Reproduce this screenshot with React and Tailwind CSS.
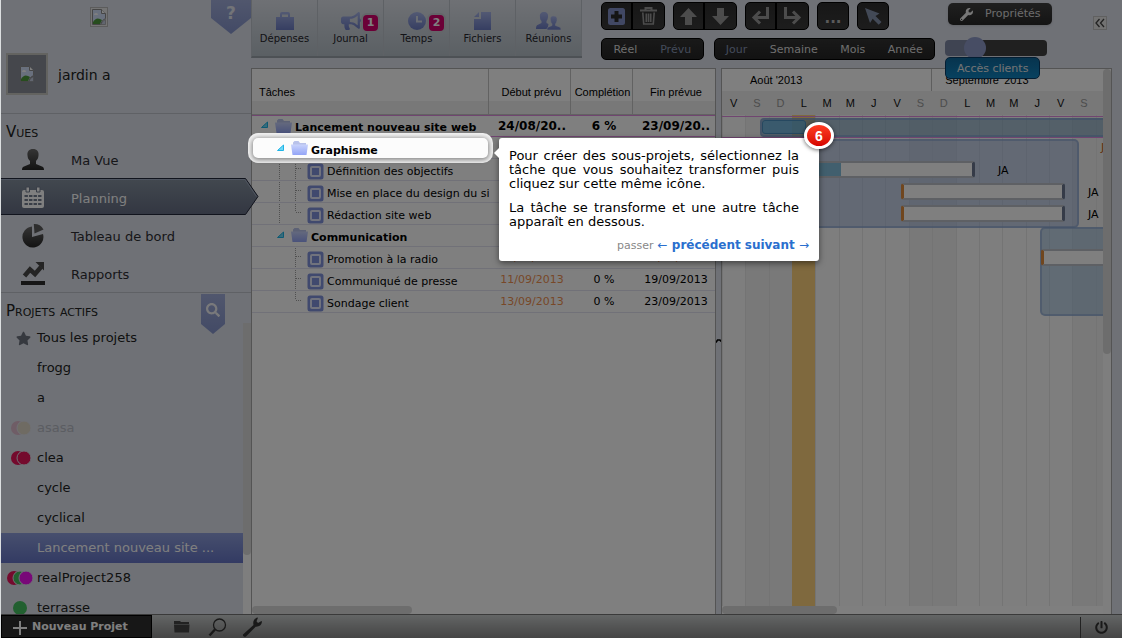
import React from "react";
import { FaSearch, FaStar, FaPowerOff, FaWrench, FaBullhorn } from "react-icons/fa";

const projects = [
  { name: "Tous les projets", star: true },
  { name: "frogg" },
  { name: "a" },
  { name: "asasa", faded: true, dots: ["#e0a0b8", "#e0cfae"] },
  { name: "clea", dots: ["#e8145a", "#e8145a"] },
  { name: "cycle" },
  { name: "cyclical" },
  { name: "Lancement nouveau site ...", selected: true },
  { name: "realProject258", dots: ["#e8145a", "#44c060", "#f010f0"] },
  { name: "terrasse", dots: ["#44c060"] },
];

const tasks = [
  { name: "Lancement nouveau site web", kind: "root", start: "24/08/20..", done: "6 %", end: "23/09/20.." },
  { name: "Graphisme", kind: "group" },
  { name: "Définition des objectifs", kind: "leaf", guide: true },
  { name: "Mise en place du design du site", kind: "leaf", guide: true },
  { name: "Rédaction site web", kind: "leaf", guide: true, last: true },
  { name: "Communication", kind: "group" },
  { name: "Promotion à la radio", kind: "leaf", late: true, lateEnd: true, start: "05/09/2013", done: "0 %", end: "12/09/2013" },
  { name: "Communiqué de presse", kind: "leaf", late: true, start: "11/09/2013", done: "0 %", end: "19/09/2013" },
  { name: "Sondage client", kind: "leaf", late: true, last: true, start: "13/09/2013", done: "0 %", end: "23/09/2013" },
];

const days = ["V", "S", "D", "L", "M", "M", "J", "V", "S", "D", "L", "M", "M", "J", "V", "S", ""];
const weekend = (i) => i % 7 === 1 || i % 7 === 2;

const bars = [
  { left: 40, top: 46, width: 213, progress: 76 },
  { left: 179, top: 68, width: 164, late: true },
  { left: 179, top: 90, width: 164, late: true },
  { left: 319, top: 134, width: 180, late: true },
];

const owners = [
  { left: 276, top: 48 },
  { left: 366, top: 70 },
  { left: 366, top: 92 },
];

function Missing() {
  return (
    <svg width="14" height="16" viewBox="0 0 14 16" aria-hidden="true">
      <path d="M.5.5h9l4 4v5l-3 2-2 4h-8z" fill="#d3e0fb" stroke="#8d8d8d" />
      <path d="M9.500 .5v4h4" fill="#fff" stroke="#8d8d8d" />
      <path d="M2 6q0-2 2-2t2 2z" fill="#fff" />
      <path d="M1 15v-2q3-5 7-3l2 1-2 4z" fill="#4f9a3c" />
      <path d="M9 15.500l1.500-3 3-2v5z" fill="#c4cde0" stroke="#8d8d8d" strokeWidth=".6" />
    </svg>
  );
}

function Ribbon({ width, height, tip }) {
  return (
    <svg className="absolute inset-0" width={width} height={height} aria-hidden="true">
      <path d={`M0 0H${width}V${height - tip}L${width / 2} ${height}L0 ${height - tip}z`} fill="url(#ribbon)" />
    </svg>
  );
}

function Defs() {
  return (
    <svg width="0" height="0" className="absolute" aria-hidden="true">
      <defs>
        <linearGradient id="ribbon" x1="0" y1="0" x2="0" y2="1">
          <stop offset="0" stopColor="#a2aedb" />
          <stop offset="1" stopColor="#8594cc" />
        </linearGradient>
        <linearGradient id="blue" x1="0" y1="0" x2="0" y2="1">
          <stop offset="0" stopColor="#a6b3e8" />
          <stop offset="1" stopColor="#6c7cc4" />
        </linearGradient>
        <linearGradient id="folder" x1="0" y1="0" x2="0" y2="1">
          <stop offset="0" stopColor="#c9d3fb" />
          <stop offset="1" stopColor="#93a4f7" />
        </linearGradient>
        <linearGradient id="ink" x1="0" y1="0" x2="0" y2="1">
          <stop offset="0" stopColor="#6a6a6a" />
          <stop offset="1" stopColor="#262626" />
        </linearGradient>
        <linearGradient id="arrow" x1="0" y1="0" x2="0" y2="1">
          <stop offset="0" stopColor="#85919f" />
          <stop offset="1" stopColor="#666e84" />
        </linearGradient>
      </defs>
    </svg>
  );
}

const navIcons = {
  user: (
    <svg width="24" height="24" viewBox="0 0 24 24" aria-hidden="true">
      <path d="M12 1c4 0 6 2.500 5.500 6.500-.2 2.500-1 4-2.500 5.500v3l6 2.500c1.500.6 2 1.500 2 3.500H1c0-2 .5-2.900 2-3.500L9 16v-3C7.500 11.500 6.700 10 6.500 7.500 6 3.500 8 1 12 1z" fill="url(#ink)" />
    </svg>
  ),
  calendar: (
    <svg width="24" height="24" viewBox="0 0 24 24" aria-hidden="true">
      <path d="M3 4h18a2 2 0 0 1 2 2v14a2 2 0 0 1-2 2H3a2 2 0 0 1-2-2V6a2 2 0 0 1 2-2z" fill="#fff" />
      <path d="M5 1h3.500v5H5zM15.500 1H19v5h-3.500z" fill="#fff" stroke="#737d8f" />
      <path d="M3.500 10h17M3.500 14h17M3.500 18h17" stroke="#737d8f" strokeWidth="2" strokeDasharray="3.400 1.130" />
    </svg>
  ),
  pie: (
    <svg width="24" height="24" viewBox="0 0 24 24" aria-hidden="true">
      <path d="M11 13V2.500A10.500 10.500 0 1 0 22 10z" fill="url(#ink)" />
      <path d="M13.500 9.500L12.800 0c4.200-.1 7.500 1.500 9.700 5.500z" fill="#5c5c5c" />
    </svg>
  ),
  trend: (
    <svg width="24" height="24" viewBox="0 0 24 24" aria-hidden="true">
      <path d="M0 19h24v4H0z" fill="#2c2c2c" />
      <path d="M3.500 14l5.500-6.500 5 4.500L20 5" fill="none" stroke="#484848" strokeWidth="4.500" />
      <path d="M14.500 0H23v8.500z" fill="#484848" />
    </svg>
  ),
};

function NavItem({ icon, label, active }) {
  return (
    <a href="#" className={"relative flex h-[38px] items-center pl-5 pt-0.5 text-[13px] " + (active ? "text-white" : "text-[#2e2e33]")}>
      {active && (
        <svg className="absolute left-0 top-0" width="259" height="38" viewBox="0 0 259 38" aria-hidden="true">
          <path d="M-2 .5H244.500L257 18.500L244.500 36.500H-2z" fill="url(#arrow)" stroke="#23283a" />
          <path d="M0 1.500H244L255.500 18.500" fill="none" stroke="#9fabc0" />
        </svg>
      )}
      <span className="relative flex w-6 justify-center">{navIcons[icon]}</span>
      <span className="relative ml-[26px] pt-0.5">{label}</span>
    </a>
  );
}

function Dots({ colors }) {
  const w = 14 + (colors.length - 1) * 6;
  return (
    <svg width={w} height="16" viewBox={`0 0 ${w} 16`} aria-hidden="true">
      {colors.map((c, i) => (
        <circle key={i} cx={7 + i * 6} cy="8" r="7" fill={c} stroke="#dee2ec" strokeWidth={i ? 1 : 0} />
      ))}
    </svg>
  );
}

function Sidebar() {
  return (
    <aside className="relative z-10 flex w-[250px] shrink-0 flex-col bg-[#dee2ec]">
      <div className="relative flex h-[114px] shrink-0 flex-col border-b border-[#bfc2ca]">
        <div className="ml-[89px] mt-[7px] flex h-5 w-[18px] items-center justify-center border border-[#b8b8b8] bg-[#e8e8e8]">
          <Missing />
        </div>
        <button aria-label="Aide" className="absolute right-0 top-0 h-[34px] w-10 pb-[6px] text-[17px] font-bold text-[#e6e8f0]">
          <Ribbon width={40} height={34} tip={16} />
          <span className="relative">?</span>
        </button>
        <div className="mt-[26px] flex items-center pl-[5px]">
          <div className="flex h-[42px] w-[42px] items-center justify-center border-2 border-[#c6c6c0] bg-[#8b8e99]">
            <Missing />
          </div>
          <span className="ml-[10px] pt-[3px] text-[14px] text-[#222]">jardin a</span>
        </div>
      </div>
      <div className="flex h-[179px] shrink-0 flex-col border-b border-[#bfc2ca]">
        <h2 className="h-[26px] pl-[5px] pt-2 text-[15px] leading-5 text-[#222] [font-variant:small-caps]">Vues</h2>
        <nav>
          <NavItem icon="user" label="Ma Vue" />
          <NavItem icon="calendar" label="Planning" active />
          <NavItem icon="pie" label="Tableau de bord" />
          <NavItem icon="trend" label="Rapports" />
        </nav>
      </div>
      <div className="relative h-[30px] shrink-0">
        <h2 className="pl-[5px] pt-2 text-[15px] leading-5 text-[#222] [font-variant:small-caps]">Projets actifs</h2>
        <button aria-label="Rechercher un projet" className="absolute right-[26px] top-px z-10 flex h-10 w-6 justify-center pt-[9px] text-[#f2f3f7]">
          <Ribbon width={24} height={40} tip={10} />
          <FaSearch size={14} className="relative" />
        </button>
      </div>
      <div className="flex min-h-0 flex-1 overflow-hidden">
        <ul className="min-w-0 flex-1">
          {projects.map((p) => (
            <li key={p.name}>
              <a
                href="#"
                className={
                  "flex h-[30px] items-center text-[13px] " +
                  (p.selected ? "bg-linear-to-b from-[#8f9fdc] to-[#6675c6] text-white" : p.faded ? "text-[#b7bac4]" : "text-[#222]")
                }
              >
                <span className={"flex w-9 shrink-0 justify-end " + (p.dots && p.dots.length === 1 ? "pr-[10px]" : p.dots && p.dots.length === 3 ? "pr-1" : "pr-[6px]") + (p.faded ? " opacity-60" : "")}>
                  {p.star && <FaStar size={15} color="#6d737f" />}
                  {p.dots && <Dots colors={p.dots} />}
                </span>
                <span className="whitespace-nowrap">{p.name}</span>
              </a>
            </li>
          ))}
        </ul>
        <div className="w-2 bg-[#fcfcfc]">
          <div className="h-[232px] rounded-b bg-[#dadada]" />
        </div>
      </div>
    </aside>
  );
}

const toolIcons = {
  bag: (
    <svg width="18" height="18" viewBox="0 0 18 18" fill="url(#blue)" aria-hidden="true">
      <path fillRule="evenodd" d="M0 5h4V2q0-2 2-2h6q2 0 2 2v3h4v13H0zM6 5h6V2.500H6z" />
    </svg>
  ),
  horn: <FaBullhorn size={20} fill="url(#blue)" />,
  clock: (
    <svg width="18" height="18" viewBox="0 0 18 18" aria-hidden="true">
      <circle cx="9" cy="9" r="9" fill="url(#blue)" />
      <path d="M9 4v5.500h5" fill="none" stroke="#d5dae6" strokeWidth="2" />
    </svg>
  ),
  file: (
    <svg width="17" height="18" viewBox="0 0 17 18" aria-hidden="true">
      <path d="M7 0h10v18H0V7h7zM5 0v5H0z" fill="url(#blue)" />
    </svg>
  ),
  people: (
    <svg width="25" height="18" viewBox="0 0 25 18" fill="url(#blue)" aria-hidden="true">
      <path d="M8 0c3 0 4.500 2 4 5-.2 2-.8 3-1.500 4v2l2 1-1 5H0c0-2.500.3-3.700 2-4.300L5.500 11V9C4.500 8 4 7 4 5c-.5-3 1-5 4-5z" />
      <path d="M17.500 4c3 0 4 2 3.500 4.500-.2 1.500-.7 2.500-1.500 3.500v1.500l3.500 1.200c1.500.6 2 1.300 2 3.300H11c0-2 .3-2.700 2-3.300l3-1.200V12c-.9-1-1.300-2-1.500-3.500C14 6 14.500 4 17.500 4z" stroke="#d0d5e2" strokeWidth=".6" />
    </svg>
  ),
};

function ToolTab({ icon, label, count }) {
  return (
    <a href="#" className="relative flex h-full w-[66px] flex-col items-center border-r border-[#bcc2ca] pt-3 text-[10px] text-[#26262c]">
      <span className="flex h-[18px] items-center">{toolIcons[icon]}</span>
      <span className="mt-[2px] leading-[14px]">{label}</span>
      {count && (
        <span className="absolute right-[3px] top-[13px] flex h-5 w-[19px] items-center justify-center rounded-md border-2 border-[#c8ccd2] bg-[#d6006e] text-[11px] font-bold text-white">
          {count}
        </span>
      )}
    </a>
  );
}

const glyphs = {
  add: (
    <svg width="17" height="17" viewBox="0 0 17 17" aria-hidden="true">
      <rect width="17" height="17" rx="2.500" fill="#8391c9" />
      <path d="M6.500 3h4v3.500H14v4h-3.500V14h-4v-3.500H3v-4h3.500z" fill="#2a2a2a" />
    </svg>
  ),
  trash: (
    <svg width="17" height="18" viewBox="0 0 17 18" fill="none" stroke="#989898" aria-hidden="true">
      <path d="M0 3.500h17M5.500 3V1h6v2" strokeWidth="2" />
      <path d="M2.800 5.500l.9 11.500h9.600l.9-11.500M6.300 6.500v8.500M8.500 6.500v8.500M10.700 6.500v8.500" strokeWidth="1.600" />
    </svg>
  ),
  up: (
    <svg width="17" height="17" viewBox="0 0 17 17" fill="#989898" aria-hidden="true">
      <path d="M8.500 0L17 9h-5v8H5V9H0z" />
    </svg>
  ),
  down: (
    <svg width="17" height="17" viewBox="0 0 17 17" fill="#989898" aria-hidden="true">
      <path d="M8.500 17L0 8h5V0h7v8h5z" />
    </svg>
  ),
  outdent: (
    <svg width="19" height="18" viewBox="0 0 19 18" fill="none" stroke="#989898" strokeWidth="3" aria-hidden="true">
      <path d="M16.500 0v10.500H3M9 4.500L3 10.500l6 6" />
    </svg>
  ),
  indent: (
    <svg width="19" height="18" viewBox="0 0 19 18" fill="none" stroke="#989898" strokeWidth="3" aria-hidden="true">
      <path d="M2.500 0v10.500H16M10 4.500l6 6-6 6" />
    </svg>
  ),
  more: <span className="pt-1 text-[15px] font-bold leading-4 text-[#b4b4b4]">...</span>,
  pointer: (
    <svg width="17" height="17" viewBox="0 0 17 17" aria-hidden="true">
      <path d="M0 0l14.500 5.500-4 2.500 6 6-2.800 2.800-6-6L5 15z" fill="#8592ac" />
    </svg>
  ),
};

const glyphLabels = {
  add: "Ajouter",
  trash: "Supprimer",
  up: "Monter",
  down: "Descendre",
  outdent: "Désindenter",
  indent: "Indenter",
  more: "Plus",
  pointer: "Sélection",
};

function ButtonGroup({ items }) {
  return (
    <div className="flex divide-x-2 divide-black overflow-hidden rounded-[5px] border border-black bg-linear-to-b from-[#2e2e2e] to-[#3a3a3a]">
      {items.map((k) => (
        <button key={k} aria-label={glyphLabels[k]} className="flex h-[26px] w-[31px] items-center justify-center only:w-[30px]">
          {glyphs[k]}
        </button>
      ))}
    </div>
  );
}

function Choice({ items, selected }) {
  return (
    <div className="flex grow rounded-[5px] border border-black bg-linear-to-b from-[#333] to-[#252525]">
      {items.map((t) => (
        <button key={t} className={"h-5 grow px-[11px] text-[11px] leading-none " + (t === selected ? "text-[#8796b4]" : "text-[#dcdcdc]")}>
          {t}
        </button>
      ))}
    </div>
  );
}

function Header() {
  return (
    <header className="relative z-10 flex h-[68px] shrink-0 items-start">
      <div className="flex h-[58px] border-b-2 border-l border-b-[#9aa2aa] border-l-[#bcc2ca] bg-linear-to-b from-[#dee2ea] to-[#b6c0c8]">
        <ToolTab icon="bag" label="Dépenses" />
        <ToolTab icon="horn" label="Journal" count="1" />
        <ToolTab icon="clock" label="Temps" count="2" />
        <ToolTab icon="file" label="Fichiers" />
        <ToolTab icon="people" label="Réunions" />
      </div>
      <div className="ml-[19px] flex w-[334px] flex-col gap-2 pt-[2px]">
        <div className="flex gap-2">
          <ButtonGroup items={["add", "trash"]} />
          <ButtonGroup items={["up", "down"]} />
          <ButtonGroup items={["outdent", "indent"]} />
          <ButtonGroup items={["more"]} />
          <ButtonGroup items={["pointer"]} />
        </div>
        <div className="flex gap-[10px]">
          <Choice items={["Réel", "Prévu"]} selected="Prévu" />
          <Choice items={["Jour", "Semaine", "Mois", "Année"]} selected="Jour" />
        </div>
      </div>
      <div className="ml-[10px] flex flex-col items-start pt-[3px]">
        <button className="ml-[3px] flex h-[22px] w-[104px] items-center gap-3 rounded-[5px] bg-linear-to-b from-[#404040] to-[#282828] pl-3 text-[11px] text-[#d8d8d8] shadow">
          <FaWrench size={13} color="#eee" />
          Propriétés
        </button>
        <input
          type="range"
          aria-label="Zoom"
          defaultValue="24"
          className="mt-[12px] h-[22px] w-[102px] appearance-none bg-transparent [&::-webkit-slider-runnable-track]:h-4 [&::-webkit-slider-runnable-track]:rounded-[4px] [&::-webkit-slider-runnable-track]:bg-[linear-gradient(90deg,#7f88a4_25%,#404040_25%)] [&::-webkit-slider-thumb]:-mt-[3px] [&::-webkit-slider-thumb]:h-[22px] [&::-webkit-slider-thumb]:w-[22px] [&::-webkit-slider-thumb]:appearance-none [&::-webkit-slider-thumb]:rounded-full [&::-webkit-slider-thumb]:bg-[#8e9ac8]"
        />
        <button className="-mt-[2px] h-[22px] rounded-[5px] border border-[#083c66] bg-linear-to-b from-[#0f689c] to-[#1084c0] px-[11px] text-[11px] leading-none text-[#e6e6e6]">
          Accès clients
        </button>
      </div>
      <button aria-label="Replier" className="ml-auto mr-[15px] mt-[16px] flex h-[14px] w-[14px] items-center justify-center border border-[#c0c0c0] bg-[#e4e4e4]">
        <svg width="10" height="10" viewBox="0 0 10 10" fill="none" stroke="#444" strokeWidth="1.300" aria-hidden="true">
          <path d="M4.500 1l-3.500 4 3.500 4M9 1L5.500 5 9 9" />
        </svg>
      </button>
    </header>
  );
}

function Toggle() {
  return (
    <svg width="16" height="21" viewBox="0 0 16 21" className="shrink-0" aria-hidden="true">
      <path d="M5.500 10.500L11.500 5v5.500z" fill="#6fd8f8" stroke="#1fb4e6" />
    </svg>
  );
}

function Folder() {
  return (
    <svg width="17" height="16" viewBox="0 0 17 16" className="mb-1 shrink-0" aria-hidden="true">
      <path d="M2 15V2.500L3.500 1h4L9 3h6v12z" fill="#b9c2ea" />
      <path d="M0 4.500h17L15.500 15h-14z" fill="url(#folder)" />
    </svg>
  );
}

function Leaf({ guide, last }) {
  return (
    <>
      <svg width="32" height="22" viewBox="0 0 32 22" className="ml-4 shrink-0" fill="none" stroke="#a0a0a0" strokeDasharray="1 1" aria-hidden="true">
        {guide && <path d="M7.500 0v22" />}
        <path d={last ? "M23.500 0v8" : "M23.500 0v22"} />
        <path d="M24 8.500h6" />
      </svg>
      <svg width="17" height="17" viewBox="0 0 17 17" className="ml-[3px] shrink-0" aria-hidden="true">
        <rect x=".5" y=".5" width="16" height="16" rx="2.500" fill="#8193dc" />
        <rect x="4" y="4" width="9" height="9" rx="1" fill="#8193dc" stroke="#e2e6fa" strokeWidth="2" />
      </svg>
    </>
  );
}

function TaskLabel({ task }) {
  const leaf = task.kind === "leaf";
  return (
    <div className={"flex h-[21px] items-center overflow-hidden whitespace-nowrap pt-[3px] text-[11px] " + (leaf ? "" : "font-bold")}>
      {task.kind === "group" && <span className="w-4 shrink-0" />}
      {leaf ? (
        <Leaf guide={task.guide} last={task.last} />
      ) : (
        <>
          <Toggle />
          <span className="w-[3px] shrink-0" />
          <Folder />
        </>
      )}
      <span className="ml-[3px] pt-[2px]">{task.name}</span>
    </div>
  );
}

function Tour() {
  return (
    <div role="dialog" aria-label="Visite guidée" className="absolute left-full top-0 ml-[11px] w-[320px] rounded-[3px] bg-white px-[10px] pb-2 pt-[11px] text-[13px] leading-[14px] text-black shadow-[0_2px_6px_rgba(0,0,0,0.5)]">
      <svg className="absolute -left-[5px] top-[10px]" width="5" height="10" aria-hidden="true">
        <path d="M5 0v10L0 5z" fill="#fff" />
      </svg>
      <span className="absolute -right-[15px] -top-[16px] flex h-[27px] w-[30px] items-center justify-center rounded-[50%] border-[3px] border-white bg-linear-to-b from-[#ff3a20] to-[#d60000] font-['Liberation_Sans'] text-[14px] font-bold text-white shadow-[0_1px_4px_rgba(0,0,0,0.6)]">
        6
      </span>
      <div className="flex flex-col gap-[10px] pr-[10px] text-justify">
        <p>Pour créer des sous-projets, sélectionnez la tâche que vous souhaitez transformer puis cliquez sur cette même icône.</p>
        <p>La tâche se transforme et une autre tâche apparaît en dessous.</p>
      </div>
      <div className="mt-[9px] flex items-baseline justify-end gap-1 text-[12px]">
        <a href="#" className="text-[11px] text-[#888]">passer</a>
        <a href="#" className="font-bold text-[#2a6fce]"><span className="font-normal">←</span> précédent</a>
        <a href="#" className="font-bold text-[#2a6fce]">suivant <span className="font-normal">→</span></a>
      </div>
    </div>
  );
}

function TaskPanel() {
  const head = "border-b border-[#c4c4c4] bg-linear-to-b from-white from-70% to-[#f0f0f0] to-72% p-0 pt-px font-['Liberation_Sans'] text-[11px] font-normal";
  return (
    <section className="flex w-[465px] shrink-0 flex-col border-x border-t border-[#a9a9a9] bg-white">
      <table className="w-full table-fixed border-separate border-spacing-0">
        <colgroup>
          <col />
          <col className="w-[82px]" />
          <col className="w-[62px]" />
          <col className="w-[82px]" />
        </colgroup>
        <thead>
          <tr className="h-[46px]">
            <th className={head + " border-r pl-[7px] text-left"}>Tâches</th>
            <th className={head + " border-r pl-1"}>Début prévu</th>
            <th className={head + " border-r pl-0.5"}>Complétion</th>
            <th className={head + " pl-1"}>Fin prévue</th>
          </tr>
        </thead>
        <tbody>
          {tasks.map((t, i) => {
            const line = i === 0 ? "border-y border-[#e08ae0]" : "border-b border-[#e2e2f0]";
            const cell = line + " overflow-hidden whitespace-nowrap p-0 pl-1 text-center " + (t.kind === "leaf" ? "pt-0.5 text-[11px]" : "text-[12px] font-bold");
            return (
              <tr key={t.name} className="h-[22px]">
                {t.name === "Graphisme" ? (
                  <td className={line + " p-0 align-bottom"}>
                    <div className="relative z-30 mx-px h-5 rounded-[5px] bg-[#fcfcfc] pl-[3px] shadow-[0_1px_5px_1px_rgba(0,0,0,0.45),0_0_0_5px_#f2f2f2]">
                      <TaskLabel task={t} />
                      <Tour />
                    </div>
                  </td>
                ) : (
                  <td className={line + " overflow-hidden p-0 pl-1"}>
                    <div className="-my-px">
                      <TaskLabel task={t} />
                    </div>
                  </td>
                )}
                <td className={cell + (t.late ? " text-[#f09050]" : "")}>{t.start}</td>
                <td className={cell}>{t.done}</td>
                <td className={cell + (t.lateEnd ? " text-[#f09050]" : "")}>{t.end}</td>
              </tr>
            );
          })}
        </tbody>
      </table>
      <div className="mt-auto h-2 w-40 rounded bg-[#dadada]" />
    </section>
  );
}

function Bar({ left, top, width, progress, late }) {
  return (
    <div
      className={"absolute flex h-[17px] overflow-hidden rounded-[3px] border-y-2 border-l-[3px] border-r-[3px] border-y-[#bcc0c8] border-r-[#6a7690] bg-white " + (late ? "border-l-[#e08c3c]" : "border-l-[#6a7690]")}
      style={{ left, top, width }}
    >
      {progress && <div className="bg-[#82bfdc]" style={{ width: progress }} />}
    </div>
  );
}

function Gantt() {
  return (
    <section className="flex min-w-0 flex-1 border-x border-t border-[#a9a9a9] bg-white">
      <div className="flex min-w-0 flex-1 flex-col">
        <div className="relative min-h-0 flex-1 overflow-hidden">
          <div className="flex h-full w-[397px] flex-col">
            <div className="grid h-[22px] shrink-0 grid-cols-[repeat(17,minmax(0,1fr))] font-['Liberation_Sans'] text-[11px] leading-[22px]">
              <div className="col-span-9 border-r border-[#bdbdbd] pl-7">Août '2013</div>
              <div className="col-span-8 pl-[13px]">Septembre '2013</div>
            </div>
            <div className="grid h-6 shrink-0 grid-cols-[repeat(17,minmax(0,1fr))] bg-[#f0f0f0] text-center font-['Liberation_Sans'] text-[11px] leading-6">
              {days.map((d, i) => (
                <div key={i} className={weekend(i) ? "text-[#9a9a9a]" : "text-[#111]"}>{d}</div>
              ))}
            </div>
            <div className="relative min-h-0 flex-1">
              <div className="grid h-full grid-cols-[repeat(17,minmax(0,1fr))]">
                {days.map((d, i) => (
                  <div key={i} className={"border-l " + (i === 3 ? "border-[#fed27c] bg-[#fed27c]" : weekend(i) ? "border-[#e8e8e8] bg-[#f3f3f3]" : "border-[#e8e8e8] bg-[#fcfcfc]")} />
                ))}
              </div>
              <div className="absolute left-0 top-px h-px w-full bg-[#e08ae0]" />
              <div className="absolute left-0 top-[22px] h-px w-full bg-[#e08ae0]" />
              <div className="absolute left-[38px] top-[3px] h-[19px] w-[370px] rounded-[4px] border-2 border-[#7fa0d0]/60 bg-[#7098b8]/60">
                <div className="h-[14px] w-[44px] rounded-[3px] border border-[#4c90c0] bg-[#60b0e0]/70" />
              </div>
              <div className="absolute left-[38px] top-[24px] h-[89px] w-[319px] rounded-[5px] border-2 border-[#88a4d0]/60 bg-[#90a8d4]/50" />
              <div className="absolute left-[318px] top-[112px] h-[89px] w-[180px] rounded-[5px] border-2 border-[#88a4d0]/60 bg-[#88b0d4]/50" />
              {bars.map((b) => (
                <Bar key={b.left + "-" + b.top} {...b} />
              ))}
              {owners.map((o) => (
                <span key={o.top} className="absolute text-[11px] leading-4" style={o}>JA</span>
              ))}
              <span className="absolute left-[379px] top-[25px] text-[11px] leading-4 text-[#c06010]">J</span>
            </div>
          </div>
        </div>
        <div className="h-2 w-[115px] rounded bg-[#dadada]" />
      </div>
      <div className="w-2 bg-[#fcfcfc]">
        <div className="h-[285px] rounded bg-[#dadada]" />
      </div>
    </section>
  );
}

function Footer() {
  return (
    <footer className="relative z-10 flex h-6 shrink-0 items-stretch border-t border-[#747474] bg-linear-to-b from-[#c8cccc] to-[#8a8a8a]">
      <button className="flex w-[151px] items-center gap-[5px] border border-black bg-[#2e2e2e] pl-[11px] pt-0.5 text-[11px] font-bold text-white">
        <svg width="14" height="14" viewBox="0 0 14 14" fill="#fff" aria-hidden="true">
          <path d="M6 0h2v6h6v2H8v6H6V8H0V6h6z" />
        </svg>
        Nouveau Projet
      </button>
      <button aria-label="Dossiers" className="ml-[22px]">
        <svg width="16" height="14" viewBox="0 0 16 14" fill="#444" aria-hidden="true">
          <path d="M0 2V1h6l1 1h8v2H0zM0 4.500h15.500L15 12.500H.5z" />
        </svg>
      </button>
      <button aria-label="Rechercher" className="ml-[18px]">
        <svg width="19" height="20" viewBox="0 0 19 20" fill="none" stroke="#333" aria-hidden="true">
          <circle cx="11.500" cy="8" r="6" strokeWidth="1.300" />
          <path d="M7 12.500l-5.500 6" strokeWidth="2.500" />
        </svg>
      </button>
      <button aria-label="Réglages" className="ml-[15px]">
        <svg width="20" height="20" viewBox="0 0 20 20" fill="#333" aria-hidden="true">
          <path d="M1 17.500L11.500 8c-.8-3 .2-6 3.500-7.500l1 .3-1.500 3.500 1.500 1.700L19.500 4l.5.800c-.5 3.500-3 5.200-6.300 4.900L4 19.500c-1.500 1-3.500-.5-3-2z" />
        </svg>
      </button>
      <button aria-label="Déconnexion" className="ml-auto mt-0.5 flex w-[42px] items-center justify-center border-l border-[#444] text-[#333]">
        <FaPowerOff size={13} />
      </button>
    </footer>
  );
}

export default function App() {
  return (
    <div className="relative flex h-screen flex-col overflow-hidden border-l border-[#dcdfe0] bg-[#dee2ec] font-['DejaVu_Sans',sans-serif] text-black">
      <Defs />
      <div className="flex min-h-0 flex-1">
        <Sidebar />
        <div className="flex min-w-0 flex-1 flex-col">
          <Header />
          <main className="flex min-h-0 flex-1 pr-[10px]">
            <TaskPanel />
            <div className="flex w-[5px] items-center justify-center">
              <svg width="5" height="4" viewBox="0 0 5 4" aria-hidden="true">
                <path d="M0 3.500L1.500 1H4l1 1.500" fill="none" stroke="#000" strokeWidth="1.500" />
              </svg>
            </div>
            <Gantt />
          </main>
        </div>
      </div>
      <Footer />
      <div className="absolute inset-0 z-20 bg-black/50" />
    </div>
  );
}
